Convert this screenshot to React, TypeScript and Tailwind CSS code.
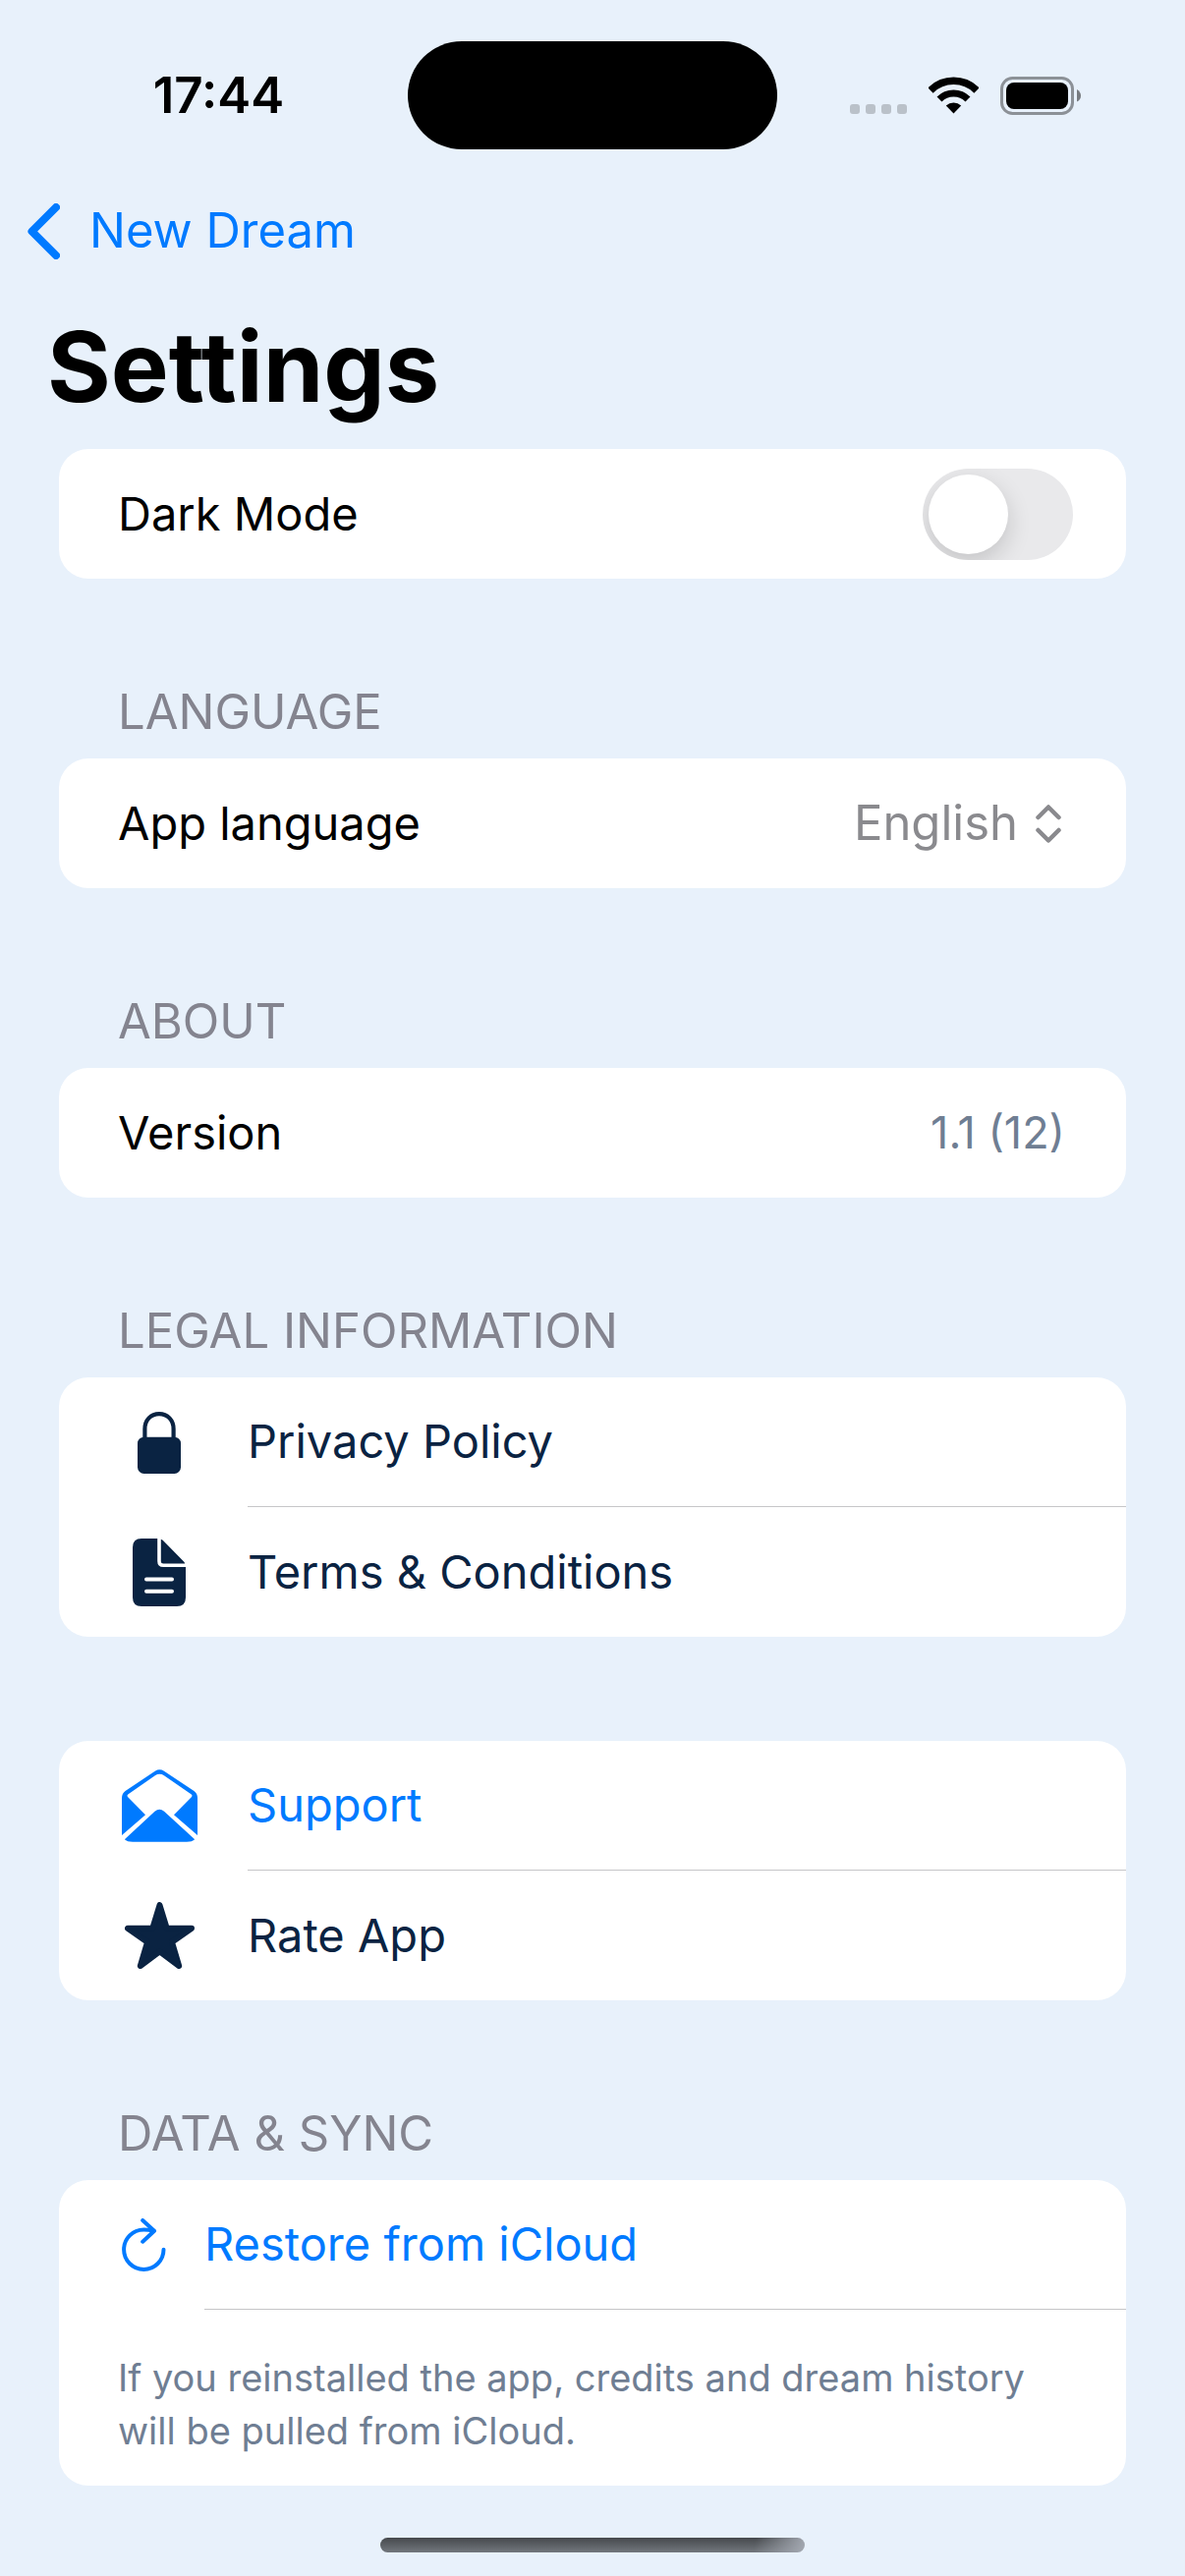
import { useState } from "react";
import type { ReactNode } from "react";

const languages = ["English", "Deutsch", "Español", "Français"];

const legalLinks = [
  { href: "#privacy", label: "Privacy Policy", icon: <LockIcon /> },
  { href: "#terms", label: "Terms & Conditions", icon: <DocumentIcon /> },
];

function CellularDots() {
  return (
    <svg viewBox="0 0 58 38" className="h-[38px] w-[58px] fill-[#bac1c9]" aria-hidden="true">
      <rect x="0" y="28" width="10" height="10" rx="3" />
      <rect x="16" y="28" width="10" height="10" rx="3" />
      <rect x="32" y="28" width="10" height="10" rx="3" />
      <rect x="48" y="28" width="10" height="10" rx="3" />
    </svg>
  );
}

function WifiIcon() {
  return (
    <svg viewBox="0 0 51 38" className="h-[38px] w-[51px]" fill="none" stroke="#000" aria-hidden="true">
      <path d="M2 14a33.25 33.25 0 0 1 47 0" strokeWidth="7.5" />
      <path d="M11 23a20.5 20.5 0 0 1 29 0" strokeWidth="7" />
      <path d="M25.5 37.5 17.8 29.6a11.4 11.4 0 0 1 15.4 0Z" fill="#000" stroke="none" />
    </svg>
  );
}

function BatteryIcon() {
  return (
    <svg viewBox="0 0 82 39" className="h-[39px] w-[82px]" aria-hidden="true">
      <rect x="1.5" y="1.5" width="72" height="36" rx="11" fill="none" stroke="#8c9197" strokeWidth="3" />
      <rect x="6" y="6" width="63" height="27" rx="8" />
      <path d="M78 13q4 2.5 4 6.5t-4 6Z" fill="#777b80" />
    </svg>
  );
}

function LockIcon() {
  return (
    <svg viewBox="0 0 44 63" className="h-[63px] w-[44px] fill-current" aria-hidden="true">
      <path d="M7.4 28V17.5C7.4 8.5 13.5 2.1 22 2.1s14.6 6.4 14.6 15.4V28" fill="none" stroke="currentColor" strokeWidth="4.2" />
      <rect x="0" y="25.7" width="44" height="37.3" rx="6.5" />
    </svg>
  );
}

function DocumentIcon() {
  return (
    <svg viewBox="0 0 54 69" className="h-[69px] w-[54px] fill-current" aria-hidden="true">
      <path d="M9 0h16.2v23q0 6 6 6H54v31q0 9-9 9H9q-9 0-9-9V9q0-9 9-9Z" />
      <path d="M28.8.8q1.2.3 2.4 1.5L51.6 23q1.4 1.4 1.6 2.5H31.3q-2.5 0-2.5-2.5Z" />
      <path d="M14 41.5h26M14 53.7h26" stroke="#fff" strokeWidth="4" strokeLinecap="round" />
    </svg>
  );
}

function EnvelopeIcon() {
  return (
    <svg viewBox="0 0 77 74" className="h-[74px] w-[77px] fill-current" aria-hidden="true">
      <path d="M0 67V29q0-4.5 3.5-7L33.8 1.8q4.6-2.9 9.2 0L73.5 22Q77 24.5 77 29v38L53 46.3 71 28q1.2-1.5-.5-2.8L43 6.3q-4.6-2.9-9.2 0L6.5 25.2Q4.800 26.500 6 28l18 18.300Z" />
      <path d="m2.8 71.3 30.7-28.5q4.8-4.2 9.6 0l31.1 28.5q-2.7 2.5-8.2 2.500H11q-5.500 0-8.200-2.500Z" />
    </svg>
  );
}

function StarIcon() {
  return (
    <svg viewBox="0 0 71 68" className="h-[68px] w-[71px] fill-current" aria-hidden="true">
      <path
        d="m35.5 3 7.2 23.7H68L48 40.8 55.2 65 35.5 50.3 15.8 65 23 40.8 3 26.7h25.3Z"
        stroke="currentColor"
        strokeWidth="6"
        strokeLinejoin="round"
      />
    </svg>
  );
}

function RestoreIcon() {
  return (
    <svg
      viewBox="0 0 45 54"
      className="h-[54px] w-[45px]"
      fill="none"
      stroke="currentColor"
      strokeWidth="4"
      strokeLinecap="round"
      strokeLinejoin="round"
      aria-hidden="true"
    >
      <path d="M42.5 31.7A20.2 20.2 0 1 1 22.3 11.5q5 0 10.2 1.2" />
      <path d="m21.2 2 11.8 10.7-11.8 11" />
    </svg>
  );
}

function Section({ title, children }: { title?: string; children: ReactNode }) {
  return (
    <section>
      {title && <h2 className="px-[60px] pb-[17px] text-[49px] leading-[60px] text-[#84848f]">{title}</h2>}
      <div className="overflow-hidden rounded-[30px] bg-white">{children}</div>
    </section>
  );
}

function LinkRow({ href, label, icon, divider }: { href: string; label: string; icon: ReactNode; divider?: boolean }) {
  return (
    <a href={href} className="flex h-[132px] items-center">
      <span className="ml-[60px] mr-12 flex w-[84px] shrink-0 justify-center">{icon}</span>
      <span className={divider ? "flex h-full flex-1 items-center border-b border-[#c6c6c8]" : "flex h-full flex-1 items-center"}>
        {label}
      </span>
    </a>
  );
}

export default function App() {
  const [darkMode, setDarkMode] = useState(false);
  const [language, setLanguage] = useState("English");

  return (
    <div className="min-h-screen bg-[#e8f1fb] pb-6 font-['Inter','Liberation_Sans',sans-serif] text-[47px] text-black">
      <header>
        <div className="grid grid-cols-[1fr_376px_1fr] items-center pt-[42px]">
          <time className="pl-[30px] text-center text-[51px] font-semibold leading-[60px]">17:44</time>
          <div className="h-[110px] rounded-full bg-black" />
          <div className="flex items-center justify-end gap-[22px] pr-[106px]">
            <CellularDots />
            <WifiIcon />
            <BatteryIcon />
          </div>
        </div>

        <nav className="mt-[21px] flex h-[124px] items-center px-7">
          <a href="#new-dream" className="flex items-center gap-[30px] text-[49px] text-[#007aff]">
            <svg viewBox="0 0 33 57" className="h-[57px] w-[33px]" fill="none" stroke="currentColor" strokeWidth="8" aria-hidden="true">
              <path d="M29 4 4.5 28.5 29 53" strokeLinecap="round" strokeLinejoin="round" />
            </svg>
            New Dream
          </a>
        </nav>

        <h1 className="mt-[15px] px-12 text-[99px] font-bold leading-[122px]">Settings</h1>
      </header>

      <main className="flex flex-col gap-[106px] px-[60px] pt-[23px]">
        <Section>
          <label className="flex h-[132px] items-center justify-between pl-[60px] pr-[54px]">
            Dark Mode
            <input
              type="checkbox"
              role="switch"
              checked={darkMode}
              onChange={(event) => setDarkMode(event.target.checked)}
              className="flex h-[93px] w-[153px] appearance-none items-center overflow-hidden rounded-full bg-[#e9e9eb] p-[6px] before:size-[81px] before:rounded-full before:bg-white before:shadow-[0_9px_24px_rgba(0,0,0,0.16)] checked:justify-end checked:bg-[#34c759]"
            />
          </label>
        </Section>

        <Section title="LANGUAGE">
          <div className="flex h-[132px] items-center pl-[60px] pr-[66px]">
            <label htmlFor="language" className="flex-1">
              App language
            </label>
            <select
              id="language"
              value={language}
              onChange={(event) => setLanguage(event.target.value)}
              className="appearance-none bg-transparent text-right text-[49px] text-[#8a8a8e] [text-align-last:right]"
            >
              {languages.map((name) => (
                <option key={name}>{name}</option>
              ))}
            </select>
            <svg viewBox="0 0 26 39" className="ml-[18px] h-[39px] w-[26px]" fill="none" stroke="#8a8a8e" strokeWidth="4.5" aria-hidden="true">
              <path d="M2.5 13 13 2.5 23.5 13M2.5 26 13 36.5 23.5 26" strokeLinecap="round" strokeLinejoin="round" />
            </svg>
          </div>
        </Section>

        <Section title="ABOUT">
          <div className="flex h-[132px] items-center justify-between pl-[60px] pr-[62px]">
            <span>Version</span>
            <span className="text-[45px] text-[#6f7e93]">1.1 (12)</span>
          </div>
        </Section>

        <Section title="LEGAL INFORMATION">
          <div className="text-[#0a2342]">
            {legalLinks.map((link, index) => (
              <LinkRow key={link.href} {...link} divider={index < legalLinks.length - 1} />
            ))}
          </div>
        </Section>

        <Section>
          <div className="text-[#007aff]">
            <LinkRow href="#support" label="Support" icon={<EnvelopeIcon />} divider />
          </div>
          <div className="text-[#0a2342]">
            <LinkRow href="#rate" label="Rate App" icon={<StarIcon />} />
          </div>
        </Section>

        <Section title="DATA & SYNC">
          <button type="button" className="flex h-[132px] w-full items-center pl-16 text-[#007aff]">
            <RestoreIcon />
            <span className="ml-[39px] flex h-full flex-1 items-center border-b border-[#c6c6c8]">Restore from iCloud</span>
          </button>
          <p className="px-[60px] pb-[29px] pt-[42px] text-[38px] leading-[54px] text-[#6f7e93]">
            If you reinstalled the app, credits and dream history will be pulled from iCloud.
          </p>
        </Section>
      </main>

      <div className="mx-auto mt-[53px] h-[15px] w-[432px] rounded-full bg-[linear-gradient(100deg,transparent_88%,#a4a9b2),linear-gradient(#46494d,#72777d)]" />
    </div>
  );
}
